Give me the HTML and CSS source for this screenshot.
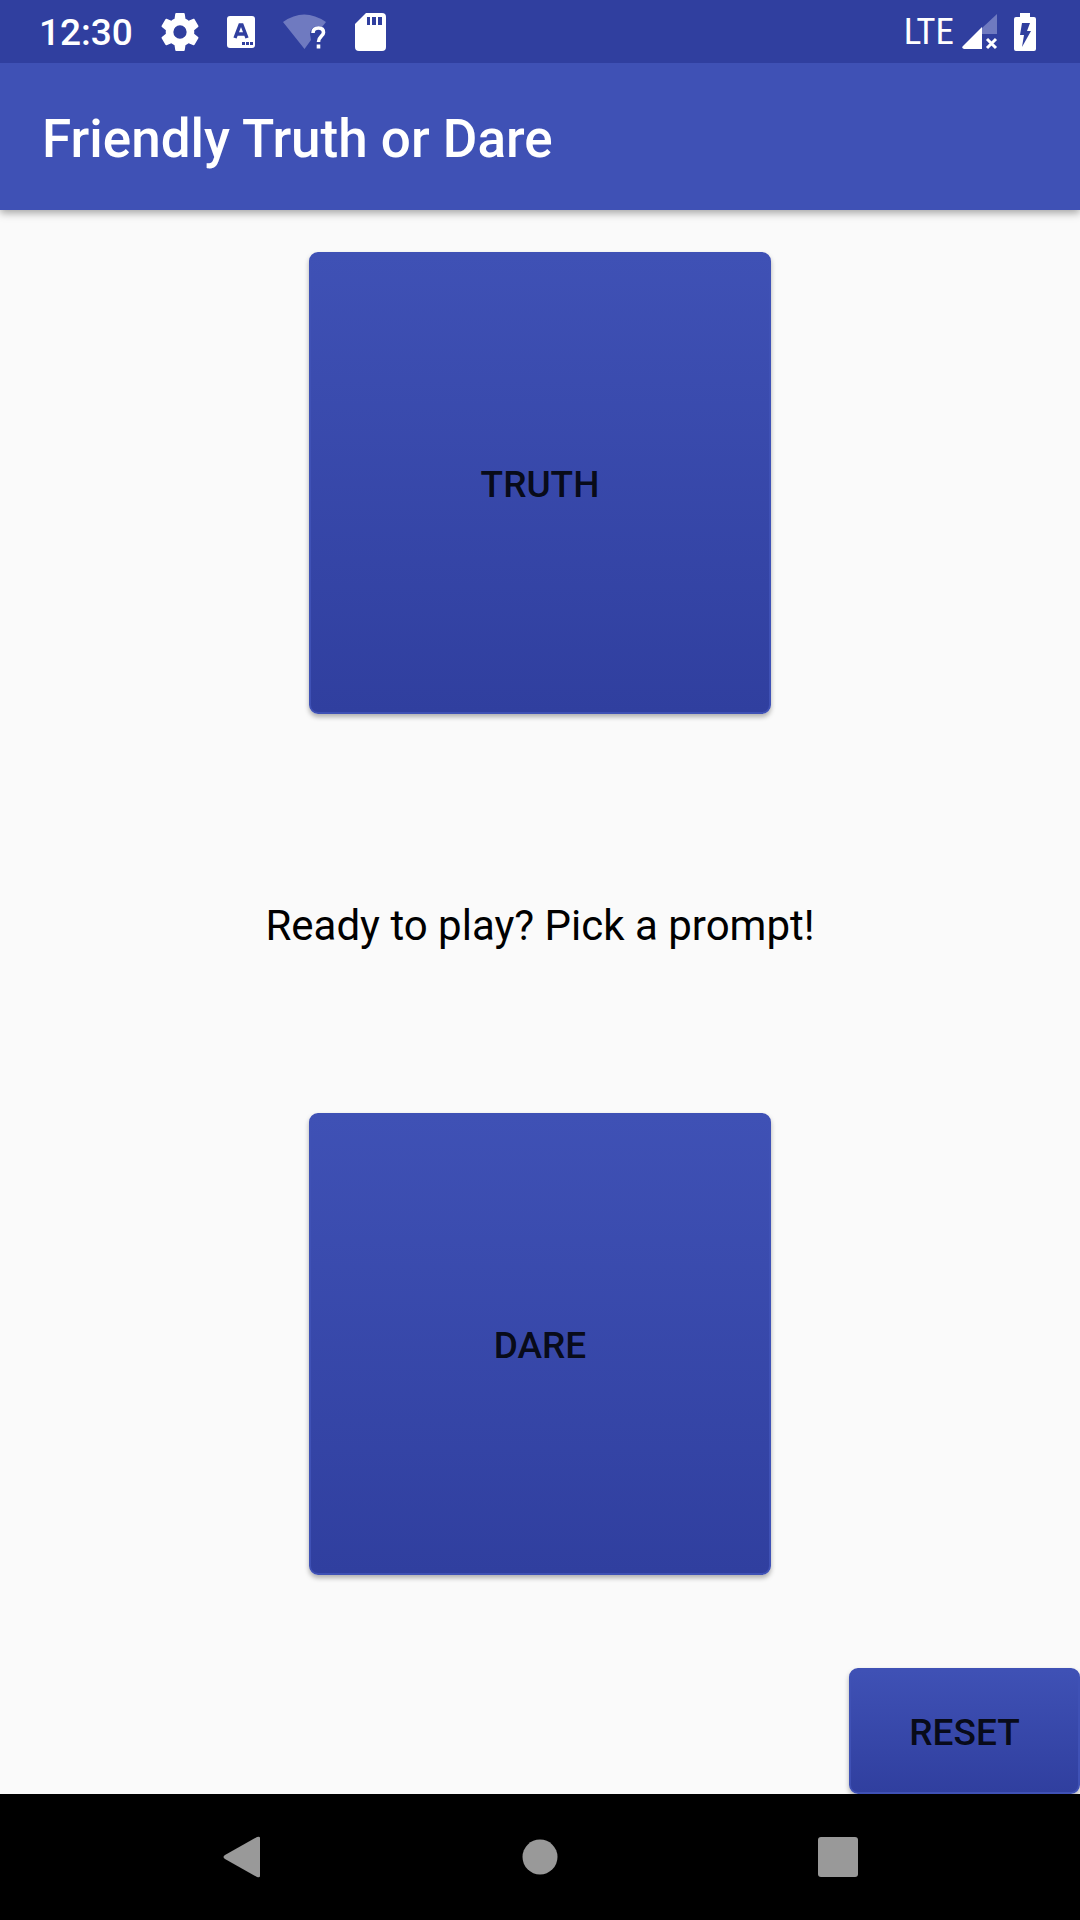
FILE: index.html
```html
<!DOCTYPE html>
<html lang="en">
<head>
<meta charset="utf-8">
<meta name="viewport" content="width=device-width, initial-scale=1">
<title>Friendly Truth or Dare</title>
<link rel="stylesheet" href="styles.css">
</head>
<body>
<div class="status-bar">
  <div class="status-group status-left">
    <span class="clock">12:30</span>
    <svg class="icon" width="38" height="38" viewBox="2 2 20 20" aria-hidden="true"><path fill="#fff" d="M19.43 12.98c.04-.32.07-.64.07-.98s-.03-.66-.07-.98l2.11-1.65c.19-.15.24-.42.12-.64l-2-3.46c-.12-.22-.39-.3-.61-.22l-2.49 1c-.52-.4-1.08-.73-1.69-.98l-.38-2.65C14.46 2.18 14.25 2 14 2h-4c-.25 0-.46.18-.49.42l-.38 2.65c-.61.25-1.17.59-1.69.98l-2.49-1c-.23-.09-.49 0-.61.22l-2 3.46c-.13.22-.07.49.12.64l2.11 1.65c-.04.32-.07.65-.07.98s.03.66.07.98l-2.11 1.65c-.19.15-.24.42-.12.64l2 3.46c.12.22.39.3.61.22l2.49-1c.52.4 1.08.73 1.69.98l.38 2.65c.03.24.24.42.49.42h4c.25 0 .46-.18.49-.42l.38-2.65c.61-.25 1.17-.59 1.69-.98l2.49 1c.23.09.49 0 .61-.22l2-3.46c.12-.22.07-.49-.12-.64zM12 15.500A3.500 3.500 0 1 1 12 8.500a3.500 3.500 0 0 1 0 7z"/></svg>
    <svg class="icon" width="28" height="32" viewBox="0 0 28 32" aria-hidden="true"><rect width="28" height="32" rx="3" fill="#fff"/><path d="M8 22 13 9h2l5 13M10 18h8" fill="none" stroke="#303f9f" stroke-width="3.400"/><path d="M15 26h3v3h-3zm4 0h3v3h-3zm4 0h3v3h-3z" fill="#303f9f"/></svg>
    <svg class="icon" width="44" height="36" viewBox="0 0 44 36" aria-hidden="true"><path d="M0 8Q21-7 43 8L39 13Q28 10 27 20L28 26 21.500 35Z" fill="#6f7ac0"/><path d="M30 19Q30 14 35.500 14 40.500 14 40.500 18.500C40.500 22 35.500 22.500 35.500 28M35.500 30.500V34.500" fill="none" stroke="#fff" stroke-width="3.600"/></svg>
    <svg class="icon" width="31" height="38" viewBox="0 0 31 38" aria-hidden="true"><path d="M11 0H27Q31 0 31 4V34Q31 38 27 38H4Q0 38 0 34V11Z" fill="#fff"/><path d="M12 4h3v8h-3zm5 0h4v8h-4zm6 0h4v8h-4z" fill="#303f9f"/></svg>
  </div>
  <div class="status-group status-right">
    <span class="network">LTE</span>
    <svg class="icon signal" width="36" height="36" viewBox="0 0 36 36" aria-hidden="true"><path d="M35 0V20H20V14Z" fill="#6f7ac0"/><path d="M20 13V35H2Q-1 34 1 32Z" fill="#fff"/><path d="M25 25 34 34M34 25 25 34" stroke="#fff" stroke-width="3"/></svg>
    <svg class="icon" width="22" height="38" viewBox="0 0 22 38" aria-hidden="true"><path d="M6 0H16V4H20Q22 4 22 6V36Q22 38 20 38H2Q0 38 0 36V6Q0 4 2 4H6Z" fill="#fff"/><path d="M8 10H16L13 18H17L8 34 10 22H6Z" fill="#303f9f"/></svg>
  </div>
</div>
<header class="app-bar"><h1 class="app-title">Friendly Truth or Dare</h1></header>
<main class="content">
  <button type="button" class="button choice">TRUTH</button>
  <p class="prompt">Ready to play? Pick a prompt!</p>
  <button type="button" class="button choice">DARE</button>
  <button type="button" class="button reset">RESET</button>
</main>
<nav class="nav-bar" aria-label="System navigation">
  <button type="button" class="nav-button" aria-label="Back"><svg width="40" height="44" viewBox="0 0 40 44"><path d="M38 3V41Q38 43 35 42L3 24Q0 22 3 20L35 2Q38 1 38 3Z" fill="#999"/></svg></button>
  <button type="button" class="nav-button" aria-label="Home"><svg width="36" height="36" viewBox="0 0 36 36"><circle cx="18" cy="18" r="17.500" fill="#999"/></svg></button>
  <button type="button" class="nav-button" aria-label="Overview"><svg width="40" height="40" viewBox="0 0 40 40"><rect width="40" height="40" rx="3" fill="#999"/></svg></button>
</nav>
</body>
</html>
```
FILE: styles.css
```css
* {
  box-sizing: border-box;
}

body {
  margin: 0;
  min-height: 100vh;
  display: flex;
  flex-direction: column;
  background: #fafafa;
  color: #000;
  font-family: Roboto, sans-serif;
}

.status-bar {
  display: flex;
  justify-content: space-between;
  height: 63px;
  padding: 0 44px 0 39px;
  background: #303f9f;
  color: #fff;
}

.status-group {
  display: flex;
  align-items: center;
}

.status-left {
  gap: 28px;
}

.status-right {
  gap: 8px;
}

.icon {
  display: block;
}

.signal {
  margin-right: 8px;
}

.clock {
  padding-top: 2px;
  font-size: 37px;
  font-weight: 500;
}

.network {
  font-family: "Roboto Condensed", "Liberation Sans Narrow", Roboto, sans-serif;
  font-size: 37px;
}

.app-bar {
  display: flex;
  align-items: center;
  height: 147px;
  padding: 4px 42px 0;
  background: #3f51b5;
  color: #fff;
  box-shadow: 0 3px 8px rgba(0, 0, 0, 0.35);
  clip-path: inset(0 0 -16px);
}

.app-title {
  margin: 0;
  font-size: 53px;
  font-weight: 500;
}

.content {
  flex: 1;
  display: flex;
  flex-direction: column;
  align-items: center;
  padding-top: 42px;
}

.button {
  padding: 2px 0 0;
  border: 2px solid #3f51b5;
  border-radius: 9px;
  background: linear-gradient(#3f51b5, #303f9f);
  color: rgba(0, 0, 0, 0.87);
  font-family: inherit;
  font-size: 37px;
  font-weight: 500;
  box-shadow: 0 3px 5px rgba(0, 0, 0, 0.3);
}

.choice {
  width: 462px;
  height: 462px;
}

.prompt {
  flex: 1;
  display: flex;
  align-items: center;
  margin: 0;
  padding-top: 24px;
  font-size: 42px;
}

.reset {
  align-self: flex-end;
  width: 231px;
  height: 126px;
  margin-top: 93px;
}

.nav-bar {
  position: relative;
  display: flex;
  align-items: center;
  justify-content: center;
  gap: 202px;
  height: 126px;
  background: #000;
}

.nav-button {
  display: flex;
  align-items: center;
  justify-content: center;
  width: 96px;
  height: 96px;
  padding: 0;
  border: 0;
  background: none;
}
```
